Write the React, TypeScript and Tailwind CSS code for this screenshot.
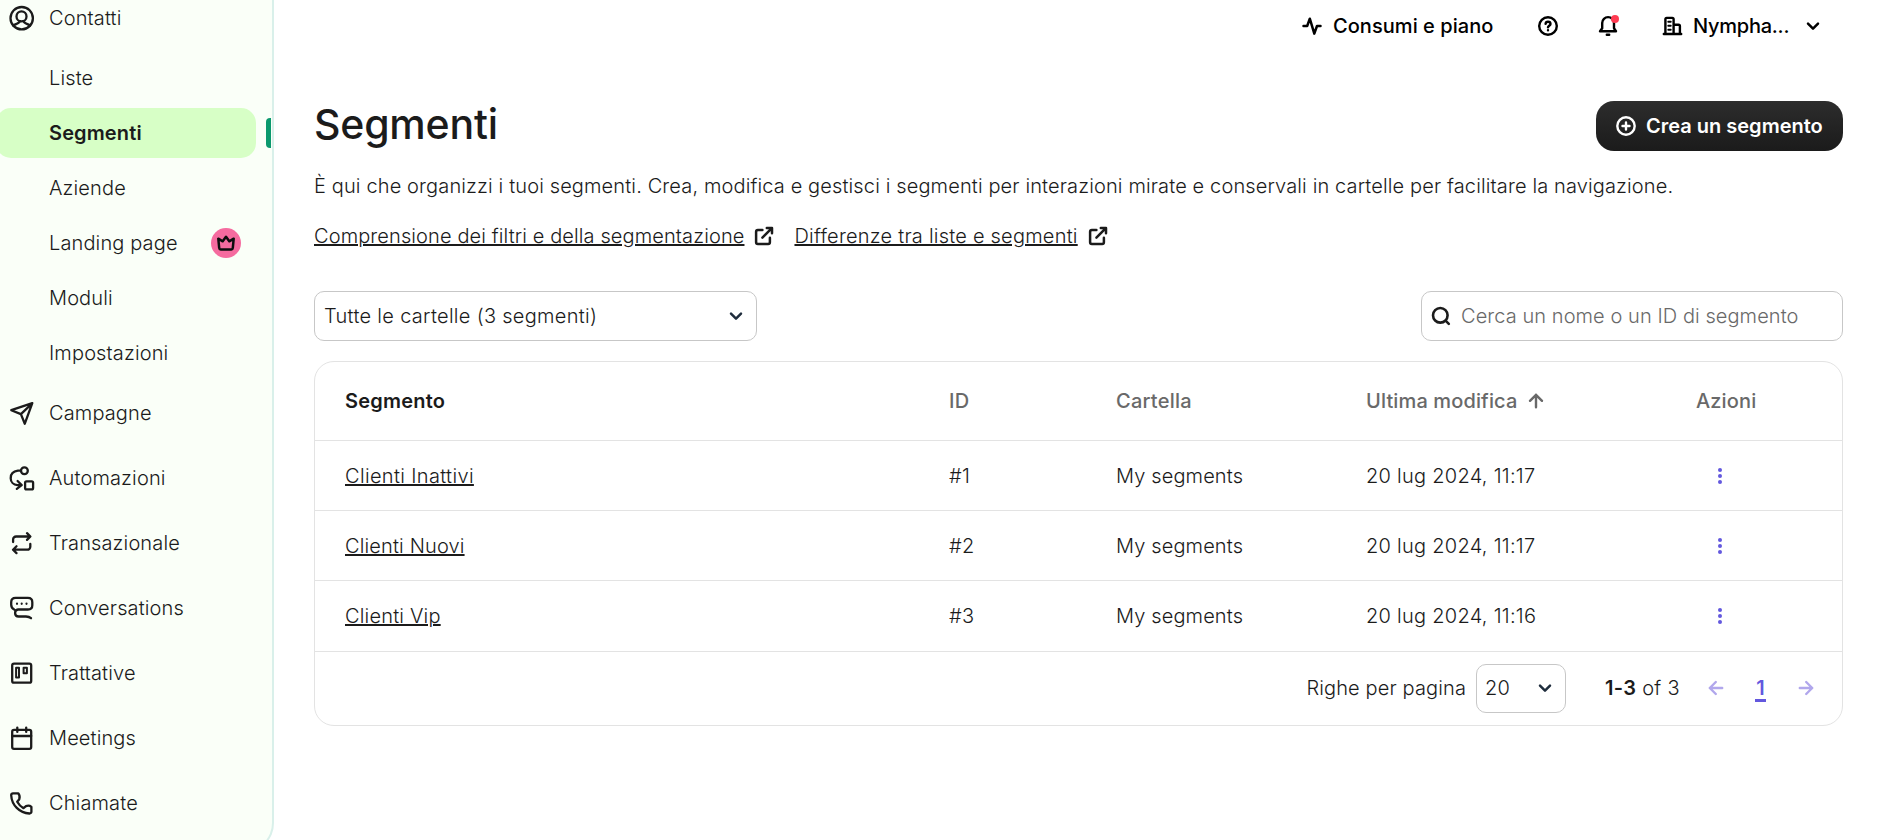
import type { ReactNode } from "react";

function NavIcon({ children }: { children: ReactNode }) {
  return (
    <svg
      className="h-[26px] w-[26px] shrink-0"
      viewBox="0.3 0 26 26"
      fill="none"
      stroke="#1b1b1b"
      strokeWidth="2.300"
      strokeLinecap="round"
      strokeLinejoin="round"
    >
      {children}
    </svg>
  );
}

const contactsIcon = (
  <NavIcon>
    <circle cx="13" cy="13.2" r="11.2" />
    <circle cx="12.8" cy="11.4" r="5" />
    <path d="M4.6 20.6c1.6-1.2 3.400-1.600 4.900-2.600 1-.6 1.500-1.200 1.900-1.900M21.400 20.600c-1.600-1.200-3.400-1.600-4.900-2.600-1-.6-1.500-1.200-1.900-1.900" />
  </NavIcon>
);

type Item = { label: string; icon: ReactNode };

const mainItems: Item[] = [
  {
    label: "Campagne",
    icon: (
      <NavIcon>
        <path d="M23.600 3.200 2.600 10.200l9.600 3.900 3.900 9.600L23.600 3.200ZM12.200 14.100 23.200 3.700" />
      </NavIcon>
    ),
  },
  {
    label: "Automazioni",
    icon: (
      <NavIcon>
        <circle cx="15.700" cy="5.700" r="3.400" />
        <path d="M12 5.700H9.200C4.900 6.200 2 9 2 13.200c0 3.900 2.900 6.700 6.800 6.900h3.600M8.900 16l4.100 4.100-4.900 3.700" />
        <rect x="16.400" y="16.400" width="8" height="8" rx="1.400" />
      </NavIcon>
    ),
  },
  {
    label: "Transazionale",
    icon: (
      <NavIcon>
        <path d="M4.400 12V9.500a3 3 0 0 1 3-3h14M18.300 3.200l3.400 3.300-3.400 3.400M21.600 14v2.700a3 3 0 0 1-3 3h-14M7.800 16.300l-3.500 3.400 3.500 3.400" />
      </NavIcon>
    ),
  },
  {
    label: "Conversations",
    icon: (
      <NavIcon>
        <path d="M5.500 14.600C3.600 13.600 2.500 12 2.500 9.800V7.200c0-2.700 1.700-4.400 4.400-4.400h12.300c2.700 0 4.400 1.700 4.400 4.400v3c0 2.600-1.700 4.300-4.400 4.300H9.300c-1.800.2-2.900 1.700-2.900 3.400 0 2.100 1.400 3.600 3.500 3.600h7.400c2.300.1 3.700.6 5 1.700" />
        <path d="M8.300 8.700v.1M13 8.700v.1M17.800 8.700v.1" strokeWidth="2.200" />
      </NavIcon>
    ),
  },
  {
    label: "Trattative",
    icon: (
      <NavIcon>
        <rect x="3.500" y="3.700" width="19" height="19" rx="1.800" />
        <path d="M7.400 7.700h2.900v9.800H7.400zM14.900 7.700h3.300v5.600h-3.300z" strokeWidth="2" />
      </NavIcon>
    ),
  },
  {
    label: "Meetings",
    icon: (
      <NavIcon>
        <rect x="3.500" y="4.900" width="19" height="18.900" rx="1.800" />
        <path d="M3.500 11h19M8.600 2.600v4.300M17.500 2.600v4.300" />
      </NavIcon>
    ),
  },
  {
    label: "Chiamate",
    icon: (
      <NavIcon>
        <path d="M9.500 3.300H4.300c-1 0-1.900.9-1.800 1.900.5 9.900 8.300 17.800 18.200 18.300 1.100.1 2-.8 2-1.800v-4.900c-1.500-1.200-3.700-1.300-5.400-.7l-2.500 2.100c-3-1.700-4.700-3.500-6.300-6.400l2.100-2.600c.6-1.900.3-4.300-1.100-5.900Z" />
      </NavIcon>
    ),
  },
];

function Chevron({ className }: { className: string }) {
  return (
    <svg className={className} viewBox="0 0 14 14" fill="none" stroke="currentColor" strokeWidth="2.500" strokeLinecap="round" strokeLinejoin="round">
      <path d="m2 4.700 5 5 5-5" />
    </svg>
  );
}

function ExternalIcon() {
  return (
    <svg className="h-5 w-5" viewBox="0 0 20 20" fill="none" stroke="#1b1b1b" strokeWidth="2.500" strokeLinecap="round" strokeLinejoin="round">
      <path d="M8.400 4H3.800a1.700 1.700 0 0 0-1.700 1.700v10.600A1.700 1.700 0 0 0 3.800 18h10.400a1.700 1.700 0 0 0 1.700-1.700v-4.600M12.800 2h5.200v5.200M17.600 2.400 8.400 11.600" />
    </svg>
  );
}

function Arrow({ className }: { className: string }) {
  return (
    <svg className={className} viewBox="0 0 16 16" fill="none" stroke="currentColor" strokeWidth="2.400" strokeLinecap="round" strokeLinejoin="round">
      <path d="M1.800 8h12.400M8.200 2l6 6-6 6" />
    </svg>
  );
}

function SubItem({ label, badge }: { label: string; badge?: boolean }) {
  return (
    <a className="flex h-[50px] items-center justify-between pl-[49px] pr-[30px]">
      <span>{label}</span>
      {badge && (
        <span className="flex h-[30px] w-[30px] items-center justify-center rounded-full bg-[#f56b9f]">
          <svg className="h-[18px] w-[18px]" viewBox="0 0 18 18" fill="none" stroke="#0d0d0d" strokeWidth="2.500" strokeLinejoin="round" strokeLinecap="round">
            <path d="m1.300 4.700.9 9.300c.1 1 .6 1.400 1.500 1.400h10.600c.9 0 1.400-.4 1.500-1.400l.9-9.300-4.400 2.600L9 2.700 5.700 7.300 1.300 4.700Z" />
          </svg>
        </span>
      )}
    </a>
  );
}

function Sidebar() {
  return (
    <nav className="h-[853px] w-[274px] shrink-0 rounded-br-[30px] border-r-2 border-b-2 border-[#d9f0ea] bg-[#fafff8] pr-px">
      <a className="flex h-9 items-center gap-[14px] pl-[9px]">
        {contactsIcon}
        <span>Contatti</span>
      </a>
      <div className="mt-[17px] flex flex-col gap-[5px]">
        <SubItem label="Liste" />
        <div className="flex h-[50px] items-center justify-between">
          <a className="-ml-1 flex h-full w-[260px] items-center rounded-[15px] bg-[#d7ffc6] pl-[53px] font-semibold">Segmenti</a>
          <span className="h-[30px] w-[5px] rounded-l-[4px] bg-[#0b996e]" />
        </div>
        <SubItem label="Aziende" />
        <SubItem label="Landing page" badge />
        <SubItem label="Moduli" />
        <SubItem label="Impostazioni" />
      </div>
      <div className="mt-[10px] flex flex-col gap-[15px]">
        {mainItems.map((item) => (
          <a key={item.label} className="flex h-[50px] items-center gap-[14px] pl-[9px]">
            {item.icon}
            <span>{item.label}</span>
          </a>
        ))}
      </div>
    </nav>
  );
}

function TopBar() {
  return (
    <header className="flex h-[52px] items-center justify-end pr-[21px] font-medium tracking-normal text-black">
      <svg className="mr-[11px] h-5 w-5" viewBox="0 0 20 20" fill="none" stroke="currentColor" strokeWidth="2.500" strokeLinecap="round" strokeLinejoin="round">
        <path d="M1.500 10h3.700l2.600-7.300 4.500 14.900L15 10h3.500" />
      </svg>
      <span className="w-[160px] tracking-[0.05px] whitespace-nowrap">Consumi e piano</span>
      <svg className="ml-[44px] h-[22px] w-[22px]" viewBox="0 0 22 22" fill="none" stroke="currentColor" strokeWidth="2.400" strokeLinecap="round" strokeLinejoin="round">
        <circle cx="11" cy="11" r="8.800" />
        <path d="M8.600 8.800c.1-1.300 1.100-2.100 2.400-2.100s2.500.9 2.500 2.200c0 1.700-2.400 1.900-2.500 3.400M11 15.200v.1" />
      </svg>
      <span className="relative ml-[38px] h-[22px] w-[22px]">
        <svg className="h-[22px] w-[22px]" viewBox="0 0 22 22" fill="none" stroke="currentColor" strokeWidth="2.400" strokeLinecap="round" strokeLinejoin="round">
          <path d="M3 16.200h16l-2-2.900V8a5.900 5.900 0 0 0-11.800 0v5.300L3 16.200ZM9.800 19.800h2.400" />
        </svg>
        <span className="absolute left-[14px] top-0 h-2 w-2 rounded-full bg-[#ff3b52]" />
      </span>
      <svg className="ml-[43px] h-[22px] w-[22px]" viewBox="0 0 22 22" fill="none" stroke="currentColor" strokeWidth="2.400" strokeLinecap="round" strokeLinejoin="round">
        <path d="M1.800 19h17.400M3.400 18.500V4.200c0-.8.500-1.300 1.300-1.300h5.600c.8 0 1.300.5 1.300 1.300v14.300M11.800 9.800h4.800c.8 0 1.300.5 1.300 1.300v7.400" />
        <path d="M6.300 6.800h2.400M6.300 10.800h2.400M6.300 14.700h2.400" strokeWidth="2" />
      </svg>
      <span className="ml-[9px] w-[96px] tracking-[-0.25px] whitespace-nowrap">Nympha...</span>
      <Chevron className="ml-[17px] mr-[2px] h-[14px] w-[14px]" />
    </header>
  );
}

const rows = [
  { name: "Clienti Inattivi", id: "#1", date: "20 lug 2024, 11:17", spacing: "tracking-[0.34px]" },
  { name: "Clienti Nuovi", id: "#2", date: "20 lug 2024, 11:17", spacing: "tracking-[0.14px]" },
  { name: "Clienti Vip", id: "#3", date: "20 lug 2024, 11:16", spacing: "tracking-[0.18px]" },
];

const linkClass = "underline decoration-2 underline-offset-[1px]";

function SegmentsTable() {
  return (
    <section className="mt-5 h-[365px] rounded-[20px] border border-[#e3e3e3]">
      <div className="grid h-[79px] grid-cols-[604px_167px_250px_330px_1fr] items-center border-b border-[#e3e3e3] pl-[30px] font-medium text-[#696969]">
        <span className="font-semibold tracking-[0.22px] text-[#1b1b1b]">Segmento</span>
        <span className="tracking-[0.3px]">ID</span>
        <span className="tracking-[0.25px]">Cartella</span>
        <span className="flex items-center gap-[11px]">
          Ultima modifica
          <Arrow className="h-4 w-4 -rotate-90" />
        </span>
        <span>Azioni</span>
      </div>
      {rows.map((row) => (
        <div
          key={row.id}
          className="grid h-[70px] grid-cols-[604px_167px_250px_350px_1fr] items-center border-b border-[#e3e3e3] pl-[30px] last-of-type:h-[71px]"
        >
          <span className={row.spacing}>
            <a className={linkClass}>{row.name}</a>
          </span>
          <span className="tracking-[0.4px]">{row.id}</span>
          <span>My segments</span>
          <span className="tracking-[0.27px]">{row.date}</span>
          <span className="flex w-2 flex-col items-center gap-[2px]">
            <i className="h-1 w-1 rounded-full bg-[#6358de]" />
            <i className="h-1 w-1 rounded-full bg-[#6358de]" />
            <i className="h-1 w-1 rounded-full bg-[#6358de]" />
          </span>
        </div>
      ))}
      <footer className="flex h-[72px] items-center justify-end pr-[28px]">
        <span>Righe per pagina</span>
        <div className="ml-[10px] flex h-[49px] w-[90px] items-center justify-between rounded-[10px] border border-[#c7c7c7] pl-[8px] pr-[13px]">
          20
          <Chevron className="h-[14px] w-[14px] text-[#1f2d3d]" />
        </div>
        <span className="ml-[39px] w-[77px] tracking-[0.3px] whitespace-nowrap">
          <b className="font-semibold">1-3</b> of 3
        </span>
        <Arrow className="ml-[26px] h-4 w-4 rotate-180 text-[#b1a7ec]" />
        <span className="ml-[31px] w-[11px] border-b-[3px] border-[#6358de] pt-[3px] text-center leading-[22px] font-semibold text-[#6358de]">1</span>
        <Arrow className="ml-[32px] h-4 w-4 text-[#b1a7ec]" />
      </footer>
    </section>
  );
}

export default function App() {
  return (
    <div className="flex h-[840px] overflow-hidden bg-white font-['Inter',sans-serif] text-[20px] leading-[30px] font-light tracking-[0.13px] text-[#1b1b1b]">
      <Sidebar />
      <main className="flex-1 pl-[40px] pr-[34px]">
        <TopBar />
        <div className="mt-[49px] flex h-[50px] items-center justify-between">
          <h1 className="-mt-[4px] text-[41px] leading-[50px] font-medium tracking-[-0.2px]">Segmenti</h1>
          <button className="flex h-[50px] w-[247px] items-center rounded-[18px] bg-linear-to-b from-[#2d2d2d] to-[#1b1b1b] pl-[19px] font-semibold tracking-normal whitespace-nowrap text-white">
            <svg className="mr-[9px] h-[22px] w-[22px]" viewBox="0 0 22 22" fill="none" stroke="currentColor" strokeWidth="2.400" strokeLinecap="round">
              <circle cx="11" cy="11" r="8.700" />
              <path d="M11 7.500v7M7.500 11h7" />
            </svg>
            Crea un segmento
          </button>
        </div>
        <p className="mt-5 whitespace-nowrap">
          È qui che organizzi i tuoi segmenti. Crea, modifica e gestisci i segmenti per interazioni mirate e conservali in cartelle per facilitare la navigazione.
        </p>
        <div className="mt-5 flex items-center whitespace-nowrap">
          <a className="tracking-[0.11px] underline decoration-2 underline-offset-[1px]">Comprensione dei filtri e della segmentazione</a>
          <span className="mr-5 ml-[10px]">
            <ExternalIcon />
          </span>
          <a className="tracking-[0.22px] underline decoration-2 underline-offset-[1px]">Differenze tra liste e segmenti</a>
          <span className="ml-[10px]">
            <ExternalIcon />
          </span>
        </div>
        <div className="mt-10 flex justify-between">
          <div className="flex h-[50px] w-[443px] items-center justify-between rounded-[10px] border border-[#c7c7c7] pl-[9px] pr-[13px] tracking-[0.3px]">
            Tutte le cartelle (3 segmenti)
            <Chevron className="h-[14px] w-[14px] text-[#1f2d3d]" />
          </div>
          <div className="flex h-[50px] w-[422px] items-center rounded-[10px] border border-[#c7c7c7] pl-[9px] tracking-[0.07px] text-[#696969]">
            <svg className="mr-[10px] h-5 w-5" viewBox="0 0 20 20" fill="none" stroke="#1b1b1b" strokeWidth="2.600" strokeLinecap="round">
              <circle cx="9.300" cy="9.300" r="7.300" />
              <path d="m14.800 14.800 3 3" />
            </svg>
            Cerca un nome o un ID di segmento
          </div>
        </div>
        <SegmentsTable />
      </main>
    </div>
  );
}
